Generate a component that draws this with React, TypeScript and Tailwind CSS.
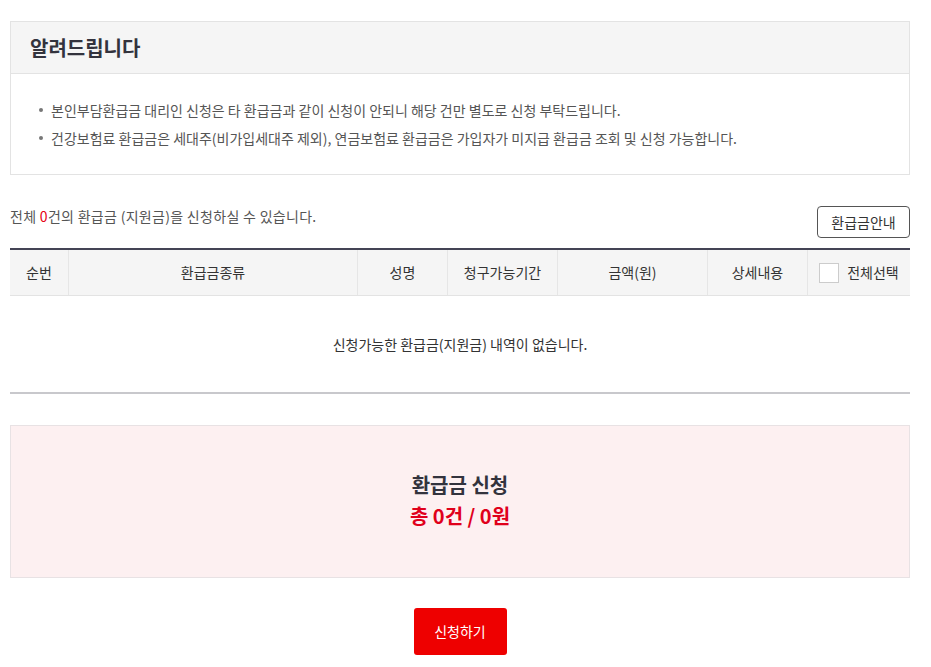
import React from "react";

const columns = [
  { label: "순번", w: "w-[59px]" },
  { label: "환급금종류", w: "w-[289px]" },
  { label: "성명", w: "w-[90px]" },
  { label: "청구가능기간", w: "w-[110px]" },
  { label: "금액(원)", w: "w-[150px]" },
  { label: "상세내용", w: "w-[100px]" },
];

const notices = [
  "본인부담환급금 대리인 신청은 타 환급금과 같이 신청이 안되니 해당 건만 별도로 신청 부탁드립니다.",
  "건강보험료 환급금은 세대주(비가입세대주 제외), 연금보험료 환급금은 가입자가 미지급 환급금 조회 및 신청 가능합니다.",
];

export default function App() {
  return (
    <div
      className="min-h-screen bg-white px-[10px] pt-[21px] pb-[12px] w-[920px] text-[#333]"
      style={{ fontFamily: '"Noto Sans CJK KR", "Noto Sans", sans-serif' }}
    >
      {/* 알려드립니다 */}
      <div className="border border-[#e3e3e3]">
        <div className="h-[52px] bg-[#f5f5f5] border-b border-[#e3e3e3] flex items-center px-[19px]">
          <h2 className="text-[20px] font-bold text-[#33333d]">알려드립니다</h2>
        </div>
        <ul className="py-[22px] px-[28px]">
          {notices.map((n) => (
            <li key={n} className="flex items-center text-[14px] leading-[28px] text-[#555]">
              <span className="w-[4px] h-[4px] rounded-full bg-[#777] mr-[8px] shrink-0" />
              {n}
            </li>
          ))}
        </ul>
      </div>

      {/* 안내 문구 + 버튼 */}
      <div className="flex justify-between items-start mt-[31px]">
        <p className="text-[14px] leading-[20px] text-[#555] tracking-[0.3px]">
          전체 <span className="text-[#e60012]">0</span>건의 환급금 (지원금)을 신청하실 수 있습니다.
        </p>
        <button className="h-[32px] w-[93px] border border-[#555] rounded-[4px] text-[14px] text-[#333] bg-white">
          환급금안내
        </button>
      </div>

      {/* 테이블 */}
      <div className="mt-[10px] border-t-2 border-[#444455]">
        <div className="flex h-[46px] bg-[#f5f5f5] border-b border-[#e3e3e3] text-[14px] text-[#333]">
          {columns.map((c) => (
            <div key={c.label} className={`${c.w} flex items-center justify-center border-r border-[#e6e6e6]`}>
              {c.label}
            </div>
          ))}
          <div className="flex-1 flex items-center justify-center gap-[8px]">
            <span className="w-[20px] h-[20px] border border-[#ccc] bg-white" />
            전체선택
          </div>
        </div>
        <div className="h-[98px] flex items-center justify-center text-[14px] text-[#333] border-b-2 border-[#c8c8cc]">
          신청가능한 환급금(지원금) 내역이 없습니다.
        </div>
      </div>

      {/* 환급금 신청 요약 */}
      <div className="mt-[31px] h-[153px] pb-[4px] bg-[#fdf0f1] border border-[#e8e2e4] flex flex-col items-center justify-center">
        <p className="text-[20px] font-bold leading-[31px] text-[#33333d]">환급금 신청</p>
        <p className="text-[20px] font-bold leading-[31px] text-[#e0001b]">총 0건 / 0원</p>
      </div>

      <div className="flex justify-center mt-[30px]">
        <button className="w-[93px] h-[47px] bg-[#ee0000] rounded-[3px] text-white text-[14px]">
          신청하기
        </button>
      </div>
    </div>
  );
}
